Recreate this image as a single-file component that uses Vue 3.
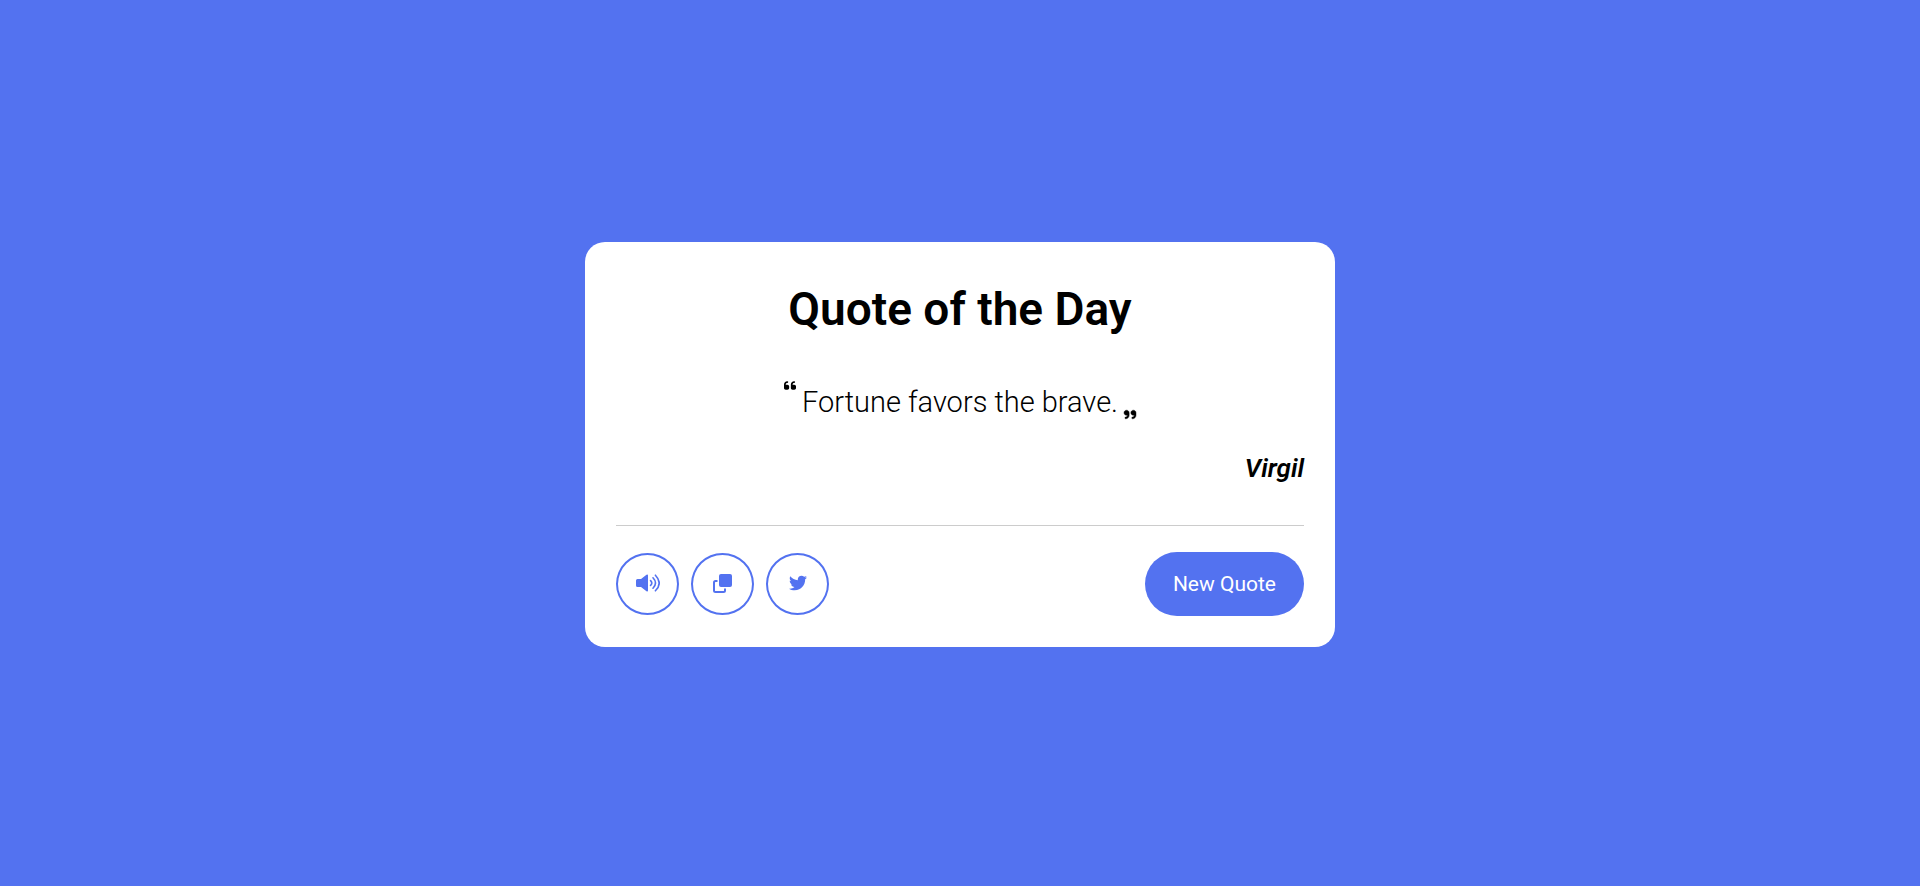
<script setup>
import { ref } from 'vue'

const quotes = [
  { text: 'Fortune favors the brave.', author: 'Virgil' },
]
const index = ref(0)

function nextQuote() {
  index.value = (index.value + 1) % quotes.length
}
</script>

<template>
  <main class="page">
    <section class="card">
      <h1 class="title">Quote of the Day</h1>
      <div class="quote">
        <svg class="mark open" viewBox="0 96 448 320" aria-hidden="true">
          <path d="M0 216C0 149.700 53.700 96 120 96h8c17.700 0 32 14.300 32 32s-14.300 32-32 32h-8c-30.900 0-56 25.100-56 56v8h64c35.300 0 64 28.700 64 64v64c0 35.300-28.700 64-64 64H64c-35.300 0-64-28.700-64-64V216zm256 0c0-66.300 53.700-120 120-120h8c17.700 0 32 14.300 32 32s-14.300 32-32 32h-8c-30.900 0-56 25.100-56 56v8h64c35.300 0 64 28.700 64 64v64c0 35.300-28.700 64-64 64h-64c-35.300 0-64-28.700-64-64V216z" />
        </svg>
        <p class="text">{{ quotes[index].text }}</p>
        <svg class="mark close" viewBox="0 96 448 320" aria-hidden="true">
          <path stroke="#000" stroke-width="16" transform="rotate(180 224 256)" d="M96 224c-11.300 0-21.900 2.300-32 5.900V224c0-35.300 28.700-64 64-64 17.700 0 32-14.300 32-32s-14.300-32-32-32C57.400 96 0 153.400 0 224v96c0 53 43 96 96 96s96-43 96-96-43-96-96-96zM352 224c-11.300 0-21.900 2.300-32 5.900V224c0-35.300 28.700-64 64-64 17.700 0 32-14.300 32-32s-14.300-32-32-32c-70.600 0-128 57.400-128 128v96c0 53 43 96 96 96s96-43 96-96-43-96-96-96z" />
        </svg>
      </div>
      <p class="author">{{ quotes[index].author }}</p>
      <footer class="actions">
        <div class="tools">
          <button class="tool" type="button" aria-label="Listen">
            <svg width="24" height="18" viewBox="0 0 24 18" aria-hidden="true">
              <path fill="currentColor" d="M1.500 5H5l5.500-4.300Q12 0 12 1.500v15q0 1.500-1.500.8L5 13H1.500Q0 13 0 11.500v-5Q0 5 1.500 5z" />
              <path fill="none" stroke="currentColor" stroke-width="1.600" stroke-linecap="round" d="M14.600 6.600q2.400 2.400 0 4.800M17 3.800q5 5.200 0 10.400M19.400 1.200q7.600 7.800 0 15.600" />
            </svg>
          </button>
          <button class="tool" type="button" aria-label="Copy">
            <svg width="19" height="19" viewBox="0 0 19 19" aria-hidden="true">
              <rect x="6" y="0" width="13" height="13" rx="2" fill="currentColor" />
              <path fill="none" stroke="currentColor" stroke-width="2" d="M4.500 7H2.500Q1 7 1 8.500v8Q1 18 2.500 18h8q1.500 0 1.500-1.500v-2" />
            </svg>
          </button>
          <button class="tool" type="button" aria-label="Tweet">
            <svg width="18" height="18" viewBox="0 0 512 512" aria-hidden="true">
              <path fill="currentColor" d="M459.370 151.716c.325 4.548.325 9.097.325 13.645 0 138.720-105.583 298.558-298.558 298.558-59.452 0-114.680-17.219-161.137-47.106 8.447.974 16.568 1.299 25.340 1.299 49.055 0 94.213-16.568 130.274-44.832-46.132-.975-84.792-31.188-98.112-72.772 6.498.974 12.995 1.624 19.818 1.624 9.421 0 18.843-1.300 27.614-3.573-48.081-9.747-84.143-51.980-84.143-102.985v-1.299c13.969 7.797 30.214 12.670 47.431 13.319-28.264-18.843-46.781-51.005-46.781-87.391 0-19.492 5.197-37.360 14.294-52.954 51.655 63.675 129.300 105.258 216.365 109.807-1.624-7.797-2.599-15.918-2.599-24.040 0-57.828 46.782-104.934 104.934-104.934 30.213 0 57.502 12.670 76.670 33.137 23.715-4.548 46.456-13.320 66.599-25.340-7.798 24.366-24.366 44.833-46.132 57.827 21.117-2.273 41.584-8.122 60.426-16.243-14.292 20.791-32.161 39.308-52.628 54.253z" />
            </svg>
          </button>
        </div>
        <button class="next" type="button" @click="nextQuote">New Quote</button>
      </footer>
    </section>
  </main>
</template>

<style>
body {
  margin: 0;
}
</style>

<style scoped>
.page {
  box-sizing: border-box;
  display: flex;
  align-items: center;
  justify-content: center;
  min-height: 100vh;
  padding: 15px 12px 12px;
  background: #5372f0;
  color: #000;
  font-family: Roboto, "Liberation Sans", sans-serif;
}

.card {
  box-sizing: border-box;
  width: 100%;
  max-width: 750px;
  padding: 31px;
  border-radius: 20px;
  background: #fff;
}

.title {
  margin: 8px 0 0;
  font-size: 46px;
  font-weight: 600;
  line-height: 56px;
  text-align: center;
}

.quote {
  display: flex;
  justify-content: center;
  gap: 6px;
  margin-top: 44px;
}

.text {
  margin: 0;
  padding-top: 4px;
  font-size: 29px;
  font-weight: 300;
  line-height: 34px;
  text-align: center;
}

.mark {
  flex: none;
  width: 12px;
  height: 9px;
  overflow: visible;
}

.close {
  align-self: flex-end;
}

.author {
  margin: 33px 0 0;
  font-size: 26px;
  font-style: italic;
  font-weight: 600;
  line-height: 32px;
  text-align: right;
}

.actions {
  display: flex;
  align-items: center;
  justify-content: space-between;
  margin-top: 41px;
  padding-top: 26px;
  border-top: 1px solid #ccc;
}

.tools {
  display: flex;
  gap: 12px;
}

.tool {
  box-sizing: border-box;
  display: flex;
  align-items: center;
  justify-content: center;
  width: 63px;
  height: 62px;
  padding: 0 0 2px;
  border: 2px solid #5372f0;
  border-radius: 50%;
  background: #fff;
  color: #5372f0;
  cursor: pointer;
}

.next {
  padding: 16px 28px;
  border: 0;
  border-radius: 32px;
  background: #5372f0;
  color: #fff;
  font-family: inherit;
  font-size: 21px;
  line-height: 32px;
  cursor: pointer;
}
</style>
